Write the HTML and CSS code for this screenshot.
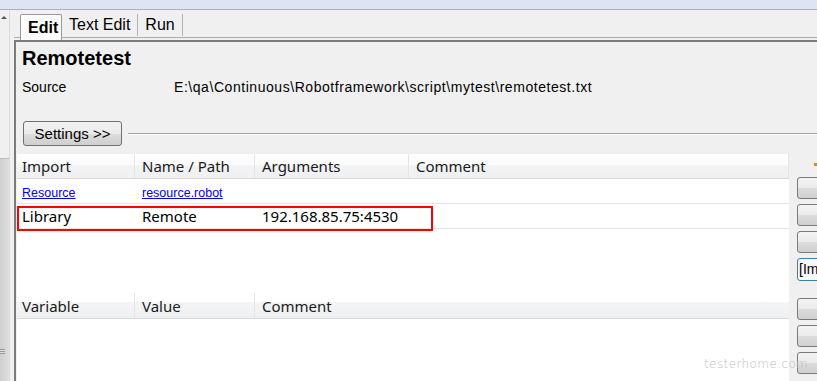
FILE: index.html
```html
<!DOCTYPE html>
<html lang="en">
<head>
  <meta charset="UTF-8">
  <title>Remotetest</title>
  <link rel="stylesheet" href="styles.css">
</head>
<body>

  <div class="topbar"></div>

  <div class="window">
    <div class="sidebar">
      <span class="arrow"></span>
      <div class="scroll"><span class="grip"></span></div>
    </div>

    <div class="editor">
      <div class="tabs">
        <span class="tab active">Edit</span>
        <span class="tab">Text Edit</span>
        <span class="tab">Run</span>
      </div>

      <div class="panel">
        <h1 class="title">Remotetest</h1>
        <div class="source">
          <span class="label">Source</span>
          <span class="path">E:\qa\Continuous\Robotframework\script\mytest\remotetest.txt</span>
        </div>

        <div class="settings">
          <button class="btn">Settings &gt;&gt;</button>
          <span class="rule"></span>
        </div>

        <div class="tables">
          <div class="grids">
            <div class="grid imports">
              <div class="row head">
                <span class="c1">Import</span>
                <span class="c2">Name / Path</span>
                <span class="c3">Arguments</span>
                <span class="c4">Comment</span>
              </div>
              <div class="row">
                <span class="c1"><a href="javascript:;">Resource</a></span>
                <span class="c2"><a href="javascript:;">resource.robot</a></span>
                <span class="c3"></span>
                <span class="c4"></span>
              </div>
              <div class="row">
                <span class="c1">Library</span>
                <span class="c2">Remote</span>
                <span class="c3">192.168.85.75:4530</span>
                <span class="c4"></span>
              </div>
              <div class="mark"></div>
            </div>

            <div class="grid variables">
              <div class="row head">
                <span class="c1">Variable</span>
                <span class="c2">Value</span>
                <span class="c3">Comment</span>
              </div>
            </div>
          </div>

          <div class="side">
            <span class="dot"></span>
            <span class="sbtn"></span>
            <span class="sbtn"></span>
            <span class="sbtn"></span>
            <span class="sbtn focus">[Im</span>
            <span class="sbtn gap"></span>
            <span class="sbtn"></span>
            <span class="sbtn"></span>
          </div>
        </div>
      </div>
    </div>
  </div>

  <div class="watermark">testerhome.com</div>

</body>
</html>
```

FILE: styles.css
```css
 *{
   box-sizing: border-box;
 }
 body{
   position: relative;
   margin: 0;
   width: 817px;
   height: 381px;
   overflow: hidden;
   background-color: #f0f0f0;
   font-family: "Liberation Sans", Arial, sans-serif;
   color: #000;
 }
 a{
   color: #0000ee;
   text-decoration: underline;
 }

 /* 顶部条 */
 .topbar{
   height: 10px;
   background-color: #dfe4f4;
   border-bottom: 1px solid #aab0c2;
 }

 .window{
   display: flex;
   height: 371px;
 }

 /* 左侧滚动条 */
 .sidebar{
   position: relative;
   width: 14px;
   display: flex;
   flex-direction: column;
 }
 .sidebar::after{
   content: '';
   position: absolute;
   top: 0;
   bottom: 0;
   left: 9px;
   width: 1px;
   background-color: #dcdcdc;
 }
 .sidebar .arrow{
   display: block;
   margin: 6px 0 0 1px;
   width: 0;
   height: 0;
   border-left: 3px solid transparent;
   border-right: 3px solid transparent;
   border-bottom: 3px solid #555;
 }
 .sidebar .scroll{
   margin-top: 139px;
   width: 9px;
   flex: 1;
   background: linear-gradient(to right, #cfcfcf, #dedede);
   border-top: 1px solid #bdbdbd;
   display: flex;
   align-items: flex-end;
   padding-bottom: 27px;
 }
 .sidebar .grip{
   display: block;
   width: 5px;
   height: 5px;
   border-top: 1px solid #999;
   border-bottom: 1px solid #999;
   background: linear-gradient(#dedede 40%, #999 40%, #999 60%, #dedede 60%);
 }

 .editor{
   flex: 1;
   display: flex;
   flex-direction: column;
 }

 /* 标签页 */
 .tabs{
   display: flex;
   align-items: flex-end;
   height: 28px;
   padding-left: 6px;
   border-bottom: 1px solid #acacac;
   margin-bottom: 2px;
 }
 .tab{
   height: 22px;
   line-height: 22px;
   padding: 0 7px;
   font-size: 16px;
   margin-bottom: 1px;
   border-right: 1px solid #b4b4b4;
 }
 .tab.active{
   width: 42px;
   height: 26px;
   line-height: 26px;
   padding: 0 0 0 7px;
   margin-bottom: -3px;
   font-weight: 700;
   background-color: #fcfcfc;
   border: 1px solid #9a9a9a;
   border-bottom: 0;
   border-radius: 2px 2px 0 0;
 }

 /* 主面板 */
 .panel{
   flex: 1;
   display: flex;
   flex-direction: column;
   border-top: 2px solid #7b7b7b;
   border-left: 2px solid #7b7b7b;
 }
 .title{
   margin: 4px 0 0 6px;
   font-size: 20px;
   line-height: 24px;
   font-weight: 700;
 }
 .source{
   display: flex;
   margin: 7px 0 0 6px;
   font-size: 14px;
   line-height: 20px;
 }
 .source .label{
   width: 152px;
 }
 .source .path{
   letter-spacing: 0.55px;
 }

 .settings{
   display: flex;
   align-items: center;
   margin: 24px 0 0 7px;
 }
 .btn{
   width: 99px;
   height: 25px;
   padding: 0;
   font-family: "Liberation Sans", Arial, sans-serif;
   font-size: 15px;
   color: #000;
   border: 1px solid #707070;
   border-radius: 3px;
   background: linear-gradient(#f2f2f2 0%, #ebebeb 50%, #dddddd 51%, #cfcfcf 100%);
 }
 .settings .rule{
   flex: 1;
   margin-left: 6px;
   height: 2px;
   border-top: 1px solid #a0a0a0;
   border-bottom: 1px solid #fff;
 }

 /* 表格 */
 .tables{
   flex: 1;
   display: flex;
   margin-top: 8px;
 }
 .grids{
   width: 772px;
   margin-left: 1px;
   display: flex;
   flex-direction: column;
 }
 .grid{
   position: relative;
   background-color: #fff;
   font-family: "Noto Sans", "Open Sans", sans-serif;
   font-size: 15px;
 }
 .grid.imports{
   height: 139px;
 }
 .grid.variables{
   flex: 1;
 }
 .row{
   display: flex;
   height: 25px;
   line-height: 25px;
   border-bottom: 1px solid #e4e4e4;
 }
 .row span{
   padding-left: 7px;
   white-space: nowrap;
 }
 .row a{
   font-family: "Liberation Sans", Arial, sans-serif;
   font-size: 12.5px;
 }
 .row.head{
   background: linear-gradient(#ffffff 0%, #fbfbfb 45%, #f1f2f4 50%, #eef0f2 100%);
   border-bottom: 1px solid #d8d8d8;
   color: #1a1a1a;
 }
 .row.head span{
   border-right: 1px solid #e6e6e6;
 }
 .variables .row.head{
   height: 26px;
   line-height: 27px;
   background: linear-gradient(#ffffff 0%, #ffffff 35%, #f3f4f6 36%, #eef0f2 100%);
 }
 .c1{
   width: 118px;
   padding-left: 5px !important;
 }
 .c2{
   width: 120px;
 }
 .c3{
   width: 154px;
 }
 .c4{
   flex: 1;
 }
 .variables .c3{
   flex: 1;
   border-right: 0 !important;
 }

 /* 红色标注框 */
 .mark{
   position: absolute;
   left: 0;
   top: 52px;
   width: 416px;
   height: 25px;
   border: 2px solid #ff0000;
 }

 /* 右侧按钮 */
 .side{
   position: relative;
   flex: 1;
   display: flex;
   flex-direction: column;
   gap: 5px;
   padding: 23px 0 0 8px;
 }
 .side .dot{
   position: absolute;
   top: 9px;
   right: 0;
   width: 3px;
   height: 3px;
   background-color: #e08a1a;
 }
 .sbtn{
   display: block;
   height: 22px;
   margin-right: -10px;
   border: 1px solid #7a7a7a;
   border-radius: 3px;
   background: linear-gradient(#f3f3f3 0%, #ebebeb 50%, #dcdcdc 51%, #d0d0d0 100%);
   font-family: "Liberation Sans", Arial, sans-serif;
   font-size: 14px;
   line-height: 20px;
   padding-left: 1px;
   overflow: hidden;
 }
 .sbtn.focus{
   height: 23px;
   background: #f7f7f7;
   border-color: #3c7fb1;
 }
 .sbtn.gap{
   margin-top: 12px;
 }

 /* 水印 */
 .watermark{
   position: absolute;
   z-index: 2;
   left: 704px;
   top: 357px;
   white-space: nowrap;
   font-family: "DejaVu Sans", sans-serif;
   font-weight: 200;
   font-size: 12px;
   letter-spacing: 0.4px;
   color: #bdbdbd;
 }
```
